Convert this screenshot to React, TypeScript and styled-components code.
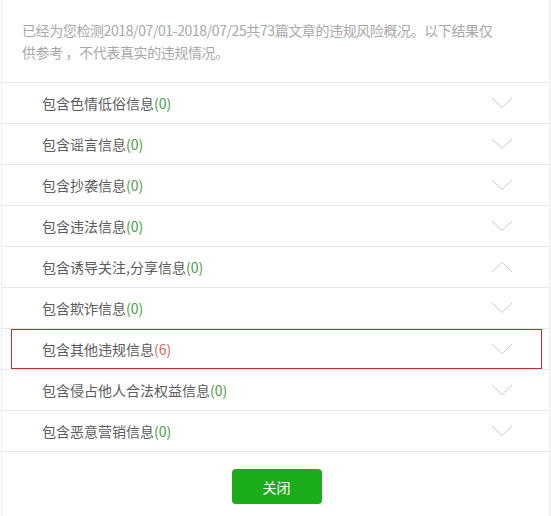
import styled, { createGlobalStyle } from 'styled-components'

const GlobalStyle = createGlobalStyle`
  html, body {
    margin: 0;
    padding: 0;
    background: #fff;
  }
  body {
    font-family: "Microsoft YaHei", "Noto Sans CJK SC", "Noto Sans", sans-serif;
  }
`

type Item = {
  title: string
  count: number
  open?: boolean
  marked?: boolean
}

const items: Item[] = [
  { title: '包含色情低俗信息', count: 0 },
  { title: '包含谣言信息', count: 0 },
  { title: '包含抄袭信息', count: 0 },
  { title: '包含违法信息', count: 0 },
  { title: '包含诱导关注,分享信息', count: 0, open: true },
  { title: '包含欺诈信息', count: 0 },
  { title: '包含其他违规信息', count: 6, marked: true },
  { title: '包含侵占他人合法权益信息', count: 0 },
  { title: '包含恶意营销信息', count: 0 },
]

const Chevron = ({ up }: { up?: boolean }) => (
  <ArrowIcon width="22" height="12" viewBox="0 0 22 12">
    <polyline
      points={up ? '1,11 11,1.5 21,11' : '1,1 11,10.5 21,1'}
      fill="none"
      stroke="#c9c9c9"
      strokeWidth="1"
    />
  </ArrowIcon>
)

function App() {
  return (
    <Frame>
      <GlobalStyle />
      <Summary>
        已经为您检测2018/07/01-2018/07/25共73篇文章的违规风险概况。以下结果仅
        <br />
        供参考 ，不代表真实的违规情况。
      </Summary>
      <List>
        {items.map((item) => (
          <Row key={item.title}>
            <RowInner $marked={item.marked}>
              <Title>
                {item.title}
                <Count $bad={item.count > 0}>({item.count})</Count>
              </Title>
              <Chevron up={item.open} />
            </RowInner>
          </Row>
        ))}
      </List>
      <Footer>
        <CloseButton>关闭</CloseButton>
      </Footer>
    </Frame>
  )
}

const Frame = styled.div`
  width: 549px;
  height: 516px;
  box-sizing: border-box;
  margin-left: 1px;
  border-left: 1px solid #ececec;
  border-right: 1px solid #ececec;
  background: #fff;
  overflow: hidden;
`
const Summary = styled.div`
  box-sizing: border-box;
  height: 83px;
  padding: 19px 10px 0 20px;
  font-size: 14px;
  line-height: 22px;
  letter-spacing: -0.4px;
  color: #a8a8a8;
  border-bottom: 1px solid #e8e8e8;
  white-space: nowrap;
`
const List = styled.div`
  display: flex;
  flex-direction: column;
`
const Row = styled.div`
  height: 41px;
  box-sizing: border-box;
  border-bottom: 1px solid #e8e8e8;
`
const RowInner = styled.div<{ $marked?: boolean }>`
  height: 40px;
  box-sizing: border-box;
  margin: 0 7px 0 9px;
  padding: 0 28px 0 30px;
  display: flex;
  align-items: center;
  justify-content: space-between;
  border: 1px solid ${(p) => (p.$marked ? '#b8312f' : 'transparent')};
`
const Title = styled.div`
  font-size: 14px;
  color: #5c5c5c;
`
const Count = styled.span<{ $bad?: boolean }>`
  color: ${(p) => (p.$bad ? '#e0625c' : '#4a9d3f')};
`
const ArrowIcon = styled.svg`
  display: block;
`
const Footer = styled.div`
  display: flex;
  justify-content: center;
  padding-top: 17px;
`
const CloseButton = styled.button`
  width: 90px;
  height: 35px;
  margin-left: 2px;
  border: none;
  border-radius: 4px;
  background: #1aad19;
  color: #fff;
  font-family: inherit;
  font-size: 14px;
  cursor: pointer;
`

export default App
